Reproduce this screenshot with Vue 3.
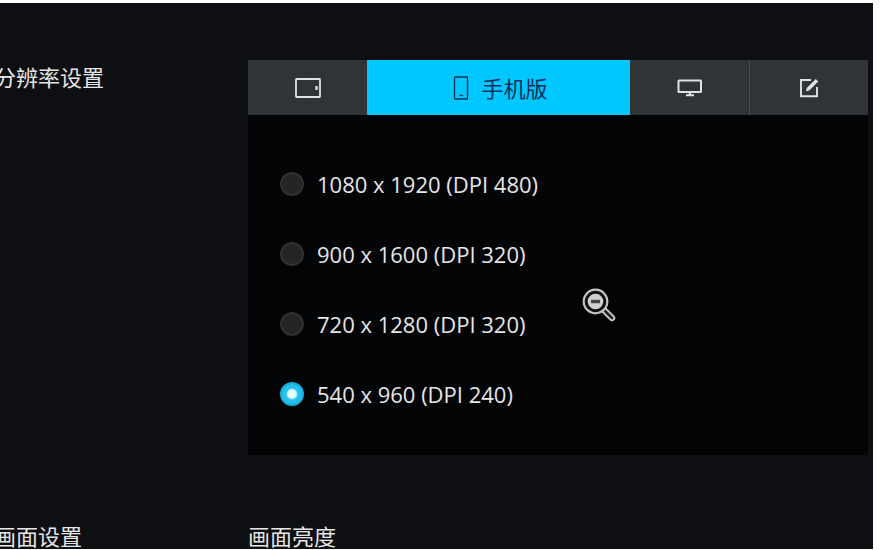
<script setup>
import { ref } from 'vue'

const activeTab = ref('phone')
const resolution = ref('540x960')

const tabs = [
  { id: 'tablet', name: '平板版' },
  { id: 'phone', name: '手机版' },
  { id: 'desktop', name: '桌面版' },
  { id: 'custom', name: '自定义' },
]

const options = [
  { id: '1080x1920', label: '1080 x 1920 (DPI 480)' },
  { id: '900x1600', label: '900 x 1600 (DPI 320)' },
  { id: '720x1280', label: '720 x 1280 (DPI 320)' },
  { id: '540x960', label: '540 x 960 (DPI 240)' },
]
</script>

<template>
  <main class="settings">
    <section class="row">
      <h2 id="resolution-title" class="title">分辨率设置</h2>
      <div class="card">
        <div class="tabs" role="tablist">
          <button
            v-for="tab in tabs"
            :key="tab.id"
            type="button"
            role="tab"
            class="tab"
            :class="{ active: activeTab === tab.id }"
            :aria-selected="activeTab === tab.id"
            :aria-label="tab.name"
            @click="activeTab = tab.id"
          >
            <svg v-if="tab.id === 'tablet'" width="26" height="20" viewBox="0 0 26 20" fill="none" stroke="currentColor" stroke-width="1.8">
              <rect x="1" y="1" width="24" height="18" rx="0.5" />
              <path d="M21.5 8v4" stroke-width="2.4" />
            </svg>
            <svg v-else-if="tab.id === 'phone'" width="16" height="24" viewBox="0 0 16 24" fill="none" stroke="currentColor" stroke-width="1.4">
              <rect x="1.5" y="1" width="13" height="22" rx="0.6" />
              <path d="M6.5 19.5h3.5" />
            </svg>
            <svg v-else-if="tab.id === 'desktop'" width="26" height="18" viewBox="0 0 26 18" fill="none" stroke="currentColor" stroke-width="2">
              <rect x="1.5" y="1.5" width="22.5" height="11.5" rx="0.5" />
              <path d="M12.8 13v3M9 16.2h8" />
            </svg>
            <svg v-else width="20" height="20" viewBox="0 0 20 20" fill="none" stroke="currentColor" stroke-width="1.9">
              <path d="M12 2H2v16.2h16V9" />
              <path d="M9 11.2L18 2.2" stroke-width="3.6" />
              <path d="M7 13.2l0.7-3.4 2.7 2.7z" fill="currentColor" stroke="none" />
            </svg>
            <span v-if="activeTab === tab.id">{{ tab.name }}</span>
          </button>
        </div>
        <div class="options" role="radiogroup" aria-labelledby="resolution-title">
          <label v-for="option in options" :key="option.id" class="option">
            <input v-model="resolution" type="radio" name="resolution" :value="option.id" />
            <span>{{ option.label }}</span>
          </label>
          <svg class="pointer" width="36" height="36" viewBox="0 0 36 36" fill="none" aria-hidden="true">
            <path d="M23 23l8 8" stroke="#c6c6c6" stroke-width="6.5" stroke-linecap="round" />
            <path d="M22 22l9 9" stroke="#242424" stroke-width="2.6" stroke-linecap="round" />
            <circle cx="14.5" cy="14.5" r="11.8" fill="#111" stroke="#c6c6c6" stroke-width="2.2" />
            <circle cx="14.5" cy="14.5" r="7.8" fill="#d0d0d0" />
            <path d="M10 14.5h9" stroke="#444" stroke-width="3.4" />
          </svg>
        </div>
      </div>
    </section>
    <section class="row">
      <h2 class="title">画面设置</h2>
      <h3 class="title">画面亮度</h3>
    </section>
  </main>
</template>

<style>
html,
body {
  margin: 0;
  background: #fff;
}

#app {
  display: flex;
  height: 100vh;
  overflow: hidden;
}
</style>

<style scoped>
.settings {
  box-sizing: border-box;
  flex: 1;
  min-width: 0;
  margin: 3px 9px 1px 0;
  padding: 57px 5px 0 0;
  display: flex;
  flex-direction: column;
  gap: 70px;
  overflow: hidden;
  background: #0d0f12;
  color: #e6e6e6;
  font-family: "Open Sans", "Noto Sans CJK SC", sans-serif;
  font-size: 22px;
  line-height: 32px;
}

.row {
  display: grid;
  grid-template-columns: 254px minmax(0, 1fr);
  margin-left: -6px;
}

.title {
  margin: 0;
  font-size: 22px;
  font-weight: 400;
  line-height: 22px;
  white-space: nowrap;
}

.row > .title:has(+ .card) {
  padding-top: 6px;
}

.tabs {
  display: grid;
  grid-template-columns: 119fr 263fr 119fr 119fr;
  height: 55px;
}

.tab {
  display: flex;
  align-items: center;
  justify-content: center;
  gap: 12px;
  margin: 0;
  padding: 0;
  border: 0;
  background: #2e3437;
  color: #e0e3e4;
  font: inherit;
  cursor: pointer;
}

.tab + .tab:last-child {
  border-left: 1px solid #444a4d;
}

.tab.active {
  padding-left: 4px;
  background: #00c8ff;
  color: #08305a;
}

.options {
  position: relative;
  padding: 34px 32px 26px;
  background: #030406;
}

.option {
  display: flex;
  align-items: center;
  gap: 13px;
  height: 70px;
  width: fit-content;
  cursor: pointer;
}

.option input {
  appearance: none;
  box-sizing: border-box;
  width: 24px;
  height: 24px;
  margin: 0;
  border: 2px solid #303133;
  border-radius: 50%;
  background: #242527;
}

.option input:checked {
  border-color: #18aede;
  background: radial-gradient(circle, #e4fcff 0 4px, #25c0ee 6px);
}

.pointer {
  position: absolute;
  top: 172px;
  left: 333px;
}
</style>
